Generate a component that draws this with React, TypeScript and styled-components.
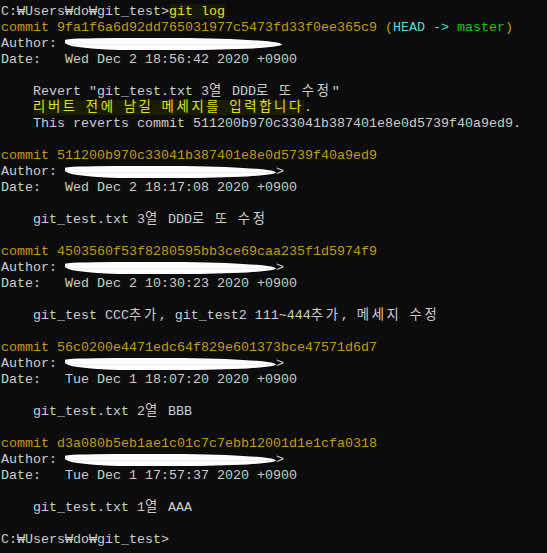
import React from "react";
import styled, { createGlobalStyle } from "styled-components";

const GlobalStyle = createGlobalStyle`
  html, body {
    margin: 0;
    padding: 0;
    background: #0c0c0c;
  }
`;

const Console = styled.div`
  width: 547px;
  height: 553px;
  box-sizing: border-box;
  padding: 4px 0 0 1px;
  background: #0c0c0c;
  color: #cccccc;
  font-family: "Liberation Mono", "Noto Sans CJK KR", monospace;
  font-size: 13.33px;
  overflow: hidden;
`;

const Line = styled.div`
  height: 16px;
  line-height: 16px;
  white-space: pre;
`;

const Tone = styled.span<{ $c: string; $bg?: string }>`
  color: ${(p) => p.$c};
  background: ${(p) => p.$bg || "transparent"};
`;

// hangul takes two console cells (16px)
const Han = styled.span`
  letter-spacing: 2.67px;
`;

// white marker scribble hiding the author's e-mail
const Redact = styled.span<{ $w: number }>`
  display: inline-block;
  vertical-align: top;
  width: ${(p) => p.$w}px;
  height: 12px;
  margin-top: 2px;
  background: linear-gradient(180deg, #ffffff 0 50%, #e6e6e6 52%, #ffffff 58% 100%);
  border-radius: 30% 70% 60% 40% / 20% 70% 60% 80%;
`;

const YELLOW = "#c19c00";
const BRIGHT = "#e1e11e";
const CYAN = "#61d6d6";
const GREEN = "#16c60c";

interface Commit {
  hash: string;
  head?: boolean;
  date: string;
  message: React.ReactNode[];
  close?: boolean;
}

const commits: Commit[] = [
  {
    hash: "9fa1f6a6d92dd765031977c5473fd33f0ee365c9",
    head: true,
    date: "Wed Dec 2 18:56:42 2020 +0900",
    close: false,
    message: [
      <>
        {"    Revert \"git_test.txt 3"}<Han>열</Han>{" DDD"}<Han>로</Han>{" "}<Han>또</Han>{" "}<Han>수정</Han>{"\""}
      </>,
      <>
        {"    "}
        <Tone $c={BRIGHT} $bg="#1b1b02">
          <Han>리버트</Han>{" "}<Han>전에</Han>{" "}<Han>남길</Han>{" "}<Han>메세지를</Han>{" "}<Han>입력합니다</Han>
        </Tone>
        <Tone $c={BRIGHT}>.</Tone>
      </>,
      <>{"    This reverts commit 511200b970c33041b387401e8e0d5739f40a9ed9."}</>,
    ],
  },
  {
    hash: "511200b970c33041b387401e8e0d5739f40a9ed9",
    date: "Wed Dec 2 18:17:08 2020 +0900",
    close: true,
    message: [
      <>
        {"    git_test.txt 3"}<Han>열</Han>{" DDD"}<Han>로</Han>{" "}<Han>또</Han>{" "}<Han>수정</Han>
      </>,
    ],
  },
  {
    hash: "4503560f53f8280595bb3ce69caa235f1d5974f9",
    date: "Wed Dec 2 10:30:23 2020 +0900",
    close: true,
    message: [
      <>
        {"    git_test CCC"}<Han>추가</Han>{", git_test2 111~444"}<Han>추가</Han>{", "}<Han>메세지</Han>{" "}<Han>수정</Han>
      </>,
    ],
  },
  {
    hash: "56c0200e4471edc64f829e601373bce47571d6d7",
    date: "Tue Dec 1 18:07:20 2020 +0900",
    close: true,
    message: [
      <>
        {"    git_test.txt 2"}<Han>열</Han>{" BBB"}
      </>,
    ],
  },
  {
    hash: "d3a080b5eb1ae1c01c7c7ebb12001d1e1cfa0318",
    date: "Tue Dec 1 17:57:37 2020 +0900",
    close: true,
    message: [
      <>
        {"    git_test.txt 1"}<Han>열</Han>{" AAA"}
      </>,
    ],
  },
];

export default function App() {
  return (
    <>
      <GlobalStyle />
      <Console>
        <Line>
          {"C:₩Users₩do₩git_test>"}
          <Tone $c={BRIGHT} $bg="#17170a">git log</Tone>
        </Line>
        {commits.map((c, i) => (
          <React.Fragment key={c.hash}>
            {i > 0 && <Line />}
            <Line>
              <Tone $c={YELLOW}>commit {c.hash}</Tone>
              {c.head && (
                <>
                  <Tone $c={YELLOW}> (</Tone>
                  <Tone $c={CYAN}>HEAD -&gt; </Tone>
                  <Tone $c={GREEN}>master</Tone>
                  <Tone $c={YELLOW}>)</Tone>
                </>
              )}
            </Line>
            <Line>
              {"Author: "}
              <Redact $w={c.close ? 211 : 217} />
              {c.close && ">"}
            </Line>
            <Line>{"Date:   " + c.date}</Line>
            <Line />
            {c.message.map((m, j) => (
              <Line key={j}>{m}</Line>
            ))}
          </React.Fragment>
        ))}
        <Line />
        <Line>{"C:₩Users₩do₩git_test>"}</Line>
      </Console>
    </>
  );
}
